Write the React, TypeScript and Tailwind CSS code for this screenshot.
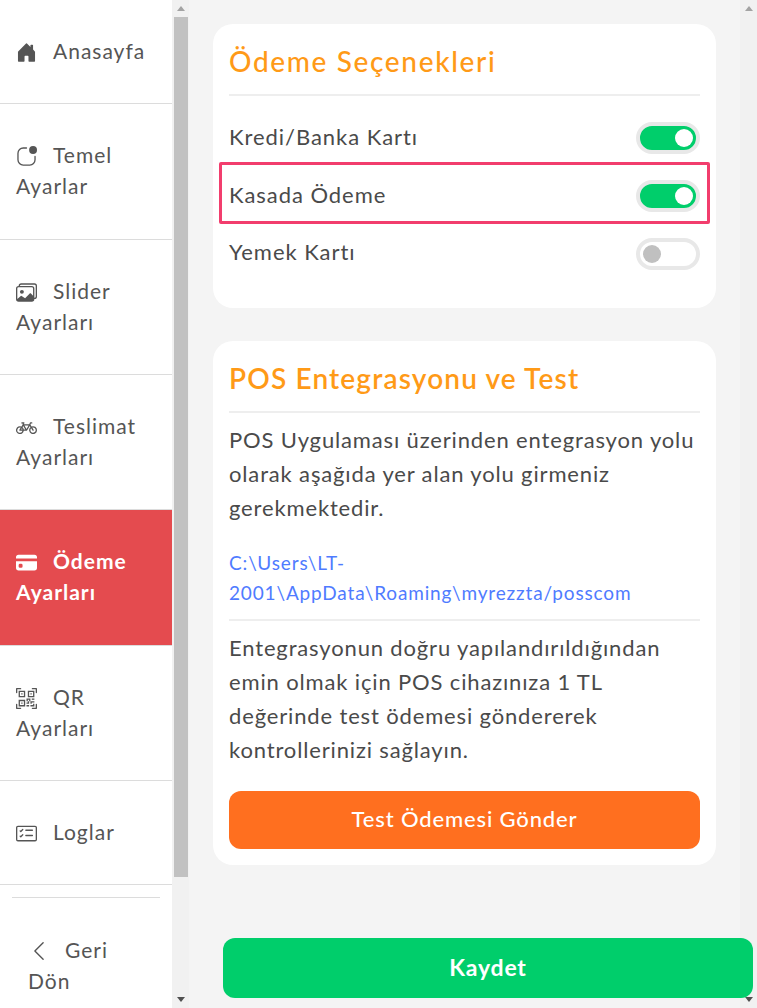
import type { ReactNode } from 'react';
import {
  BsAppIndicator,
  BsBicycle,
  BsCardChecklist,
  BsChevronLeft,
  BsCreditCardFill,
  BsHouseDoorFill,
  BsImages,
  BsQrCodeScan,
} from 'react-icons/bs';

function SideItem({
  icon,
  label,
  height,
  active,
}: {
  icon: ReactNode;
  label: string;
  height: string;
  active?: boolean;
}) {
  return (
    <a
      className={`block ${height} px-4 text-[21px] leading-[31px] tracking-[1px] border-b border-[#dcdcdc] ${
        active ? 'bg-[#e44b4f] text-white font-bold' : 'text-[#555555]'
      }`}
    >
      <span className="inline-block align-[-4px] mr-4">{icon}</span>
      {label}
    </a>
  );
}

function Toggle({ on }: { on: boolean }) {
  return (
    <div
      className={`flex items-center w-16 h-8 rounded-full border-4 border-[#e8e8e8] px-[3px] ${
        on ? 'bg-[#00ce6b] justify-end' : 'bg-white justify-start'
      }`}
    >
      <div className={`w-[18px] h-[18px] rounded-full ${on ? 'bg-white' : 'bg-[#c0c0c0]'}`} />
    </div>
  );
}

function ScrollBar({ children, width }: { children?: ReactNode; width: string }) {
  return (
    <div className={`relative shrink-0 ${width} h-full bg-[#f1f1f1]`}>
      <div className="absolute top-[6px] left-1/2 -translate-x-1/2 border-x-[4px] border-x-transparent border-b-[5px] border-b-[#a3a3a3]" />
      {children}
      <div className="absolute bottom-[6px] left-1/2 -translate-x-1/2 border-x-[4px] border-x-transparent border-t-[5px] border-t-[#505050]" />
    </div>
  );
}

export default function App() {
  return (
    <div className="flex w-[757px] h-[1008px] overflow-hidden bg-[#f4f4f4] font-['Lato',sans-serif]">
      {/* sidebar */}
      <div className="w-[172px] shrink-0 h-full bg-white">
        <SideItem height="h-[104px] pt-[35px]" icon={<BsHouseDoorFill size={21} />} label="Anasayfa" />
        <SideItem height="h-[136px] pt-[35px]" icon={<BsAppIndicator size={21} />} label="Temel Ayarlar" />
        <SideItem height="h-[135px] pt-[35px]" icon={<BsImages size={21} />} label="Slider Ayarları" />
        <SideItem height="h-[135px] pt-[35px]" icon={<BsBicycle size={21} />} label="Teslimat Ayarları" />
        <SideItem height="h-[136px] pt-[35px]" icon={<BsCreditCardFill size={21} />} label="Ödeme Ayarları" active />
        <SideItem height="h-[135px] pt-[35px]" icon={<BsQrCodeScan size={21} />} label="QR Ayarları" />
        <SideItem height="h-[104px] pt-[35px]" icon={<BsCardChecklist size={21} />} label="Loglar" />
        <div className="mx-3 mt-3 pt-[36px] pl-4 pr-4 border-t border-[#dcdcdc] text-[21px] leading-[31px] tracking-[1px] text-[#555555]">
          <span className="inline-block align-[-4px] mr-[15px]">
            <BsChevronLeft size={22} />
          </span>
          Geri Dön
        </div>
      </div>

      <ScrollBar width="w-[17px]">
        <div className="absolute top-[17px] left-[2px] right-px h-[860px] bg-[#c1c1c1]" />
      </ScrollBar>

      {/* main */}
      <div className="flex-1 min-w-0 pt-6">
        <div className="ml-6 mr-[24px] bg-white rounded-[20px] px-4 h-[284px]">
          <h2 className="h-[72px] border-b-2 border-[#eeeeee] pt-[18px] text-[28px] leading-[38px] font-medium tracking-[1.65px] text-[#ff9a17]">
            Ödeme Seçenekleri
          </h2>
          <div className="flex items-center justify-between h-[58px] mt-[13px] text-[22px] text-[#4a4a4a] tracking-[0.95px]">
            <span className="pb-[4px]">Kredi/Banka Kartı</span>
            <Toggle on />
          </div>
          <div className="relative flex items-center justify-between h-[58px] text-[22px] text-[#4a4a4a] tracking-[0.95px]">
            <span className="pb-[4px]">Kasada Ödeme</span>
            <Toggle on />
            <div className="absolute -left-[10px] -right-[10px] top-[-5px] h-[62px] border-[3px] rounded-[2px] border-[#f23d6d]" />
          </div>
          <div className="flex items-center justify-between h-[57px] text-[22px] text-[#4a4a4a] tracking-[0.95px]">
            <span className="pb-[4px]">Yemek Kartı</span>
            <Toggle on={false} />
          </div>
        </div>

        <div className="ml-6 mr-[24px] mt-[33px] bg-white rounded-[20px] px-4 h-[524px]">
          <h2 className="h-[72px] border-b-2 border-[#eeeeee] pt-[18px] text-[28px] leading-[38px] font-semibold tracking-[1.15px] text-[#ff9a17]">
            POS Entegrasyonu ve Test
          </h2>
          <p className="mt-[10px] text-[22px] leading-[34px] tracking-[0.85px] text-[#4a4a4a]">
            POS Uygulaması üzerinden entegrasyon yolu olarak aşağıda yer alan yolu girmeniz gerekmektedir.
          </p>
          <p className="mt-[23px] pb-3 border-b-2 border-[#eeeeee] text-[19px] leading-[29.5px] tracking-[0.85px] text-[#4f7bff] break-words">
            C:\Users\LT-2001\AppData\Roaming\myrezzta/posscom
          </p>
          <p className="mt-[10px] text-[22px] leading-[34px] tracking-[0.85px] text-[#4a4a4a]">
            Entegrasyonun doğru yapılandırıldığından emin olmak için POS cihazınıza 1 TL değerinde test ödemesi göndererek kontrollerinizi sağlayın.
          </p>
          <button className="mt-6 w-full h-[58px] pb-[3px] rounded-xl bg-[#ff6f1f] text-white text-[22px] font-medium tracking-[0.85px]">
            Test Ödemesi Gönder
          </button>
        </div>

        <button className="relative z-10 block mt-[73px] ml-[34px] w-[530px] h-[60px] pb-[2px] rounded-[12px] bg-[#00ce6b] text-white text-[23px] font-bold tracking-[0.8px]">
          Kaydet
        </button>
      </div>

      <ScrollBar width="w-[17px]" />
    </div>
  );
}
